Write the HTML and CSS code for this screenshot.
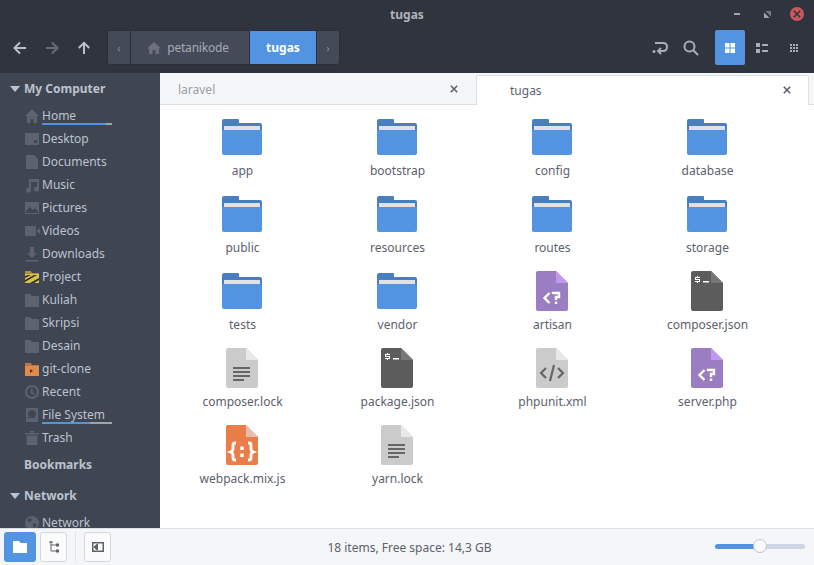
FILE: index.html
```html
<!DOCTYPE html>
<html lang="en">
<head>
    <meta charset="UTF-8">
    <title>tugas</title>
    <link rel="stylesheet" href="styles.css">
</head>

<body>
    <svg class="defs" width="0" height="0">
        <symbol id="folder" viewBox="0 0 40 36">
            <path fill="#4a7fbf" d="M2 0h14q1 0 1 1v3h21q2 0 2 2v6H0V2q0-2 2-2z"/>
            <path fill="#dfe1e4" d="M2 7h36v4H2z"/>
            <path fill="#5294e2" d="M0 11h40v23q0 2-2 2H2q-2 0-2-2z"/>
        </symbol>
        <symbol id="file-text" viewBox="0 0 32 40">
            <path fill="#cbcbcb" d="M2 0h18l12 12v26q0 2-2 2H2q-2 0-2-2V2q0-2 2-2z"/>
            <path fill="#e8e8e8" d="M20 0l12 12H20z"/>
            <path fill="#666" d="M7 19h17v2H7zM7 23h17v2H7zM7 27h17v2H7zM7 31h11v2H7z"/>
        </symbol>
        <symbol id="file-xml" viewBox="0 0 32 40">
            <path fill="#cbcbcb" d="M2 0h18l12 12v26q0 2-2 2H2q-2 0-2-2V2q0-2 2-2z"/>
            <path fill="#e8e8e8" d="M20 0l12 12H20z"/>
            <path fill="none" stroke="#666" stroke-width="2.200" d="M10 20l-5 5 5 5M22 20l5 5-5 5M18 17l-4 16"/>
        </symbol>
        <symbol id="file-php" viewBox="0 0 32 40">
            <path fill="#9a7dc2" d="M2 0h18l12 12v26q0 2-2 2H2q-2 0-2-2V2q0-2 2-2z"/>
            <path fill="#c198ec" d="M20 0l12 12H20z"/>
            <path fill="none" stroke="#fff" stroke-width="2.400" d="M13.500 22l-5 5 5 5M17 23v-1h6v4h-3v3"/>
            <path fill="#fff" d="M18.800 30.500h2.500V33h-2.500z"/>
        </symbol>
        <symbol id="file-term" viewBox="0 0 32 40">
            <path fill="#5c5c5c" d="M2 0h18l12 12v26q0 2-2 2H2q-2 0-2-2V2q0-2 2-2z"/>
            <path fill="#777" d="M20 0l12 12H20z"/>
            <path fill="#fff" d="M4 6h5v1H5v1h4v3H7v1H6v-1H4v-1h4V9H4zM6 5h1v1H6zM12 10h6v1.500h-6z"/>
        </symbol>
        <symbol id="file-js" viewBox="0 0 32 40">
            <path fill="#e97e4b" d="M2 0h18l12 12v26q0 2-2 2H2q-2 0-2-2V2q0-2 2-2z"/>
            <path fill="#e5bfa9" d="M20 0l12 12H20z"/>
            <path fill="none" stroke="#fff" stroke-width="2.800" d="M10 18H9q-2 0-2 2v4q0 2-2.500 3 2.500 1 2.500 3v3q0 2 2 2h1M22 18h1q2 0 2 2v4q0 2 2.500 3-2.500 1-2.500 3v3q0 2-2 2h-1"/>
            <path fill="#fff" d="M14.300 21.500h3.400v3.400h-3.400zM14.300 28.500h3.400v3.400h-3.400z"/>
        </symbol>
        <symbol id="s-folder" viewBox="0 0 16 16">
            <path d="M1 2h5l2 2h7v11H1z"/>
        </symbol>
        <symbol id="close" viewBox="0 0 10 10">
            <path fill="none" stroke="currentColor" stroke-width="2" d="M1 1l8 8M9 1l-8 8"/>
        </symbol>
    </svg>

    <header class="titlebar">
        <span></span>
        <span class="title">tugas</span>
        <div class="win-buttons">
            <span class="win-min"></span>
            <svg class="win-max" width="7" height="7" viewBox="0 0 7 7"><path d="M0 1.500V7h5.500z"/><path class="dim" d="M1.500 0H7v5.500z"/></svg>
            <span class="win-close"><svg width="8" height="8"><use href="#close"/></svg></span>
        </div>
    </header>

    <nav class="toolbar">
        <button class="nav-btn">
            <svg width="14" height="14" viewBox="0 0 14 14"><path d="M13 7H2M7 1.500L1.500 7 7 12.500"/></svg>
        </button>
        <button class="nav-btn off">
            <svg width="14" height="14" viewBox="0 0 14 14"><path d="M1 7h11M7 1.500L12.500 7 7 12.500"/></svg>
        </button>
        <button class="nav-btn">
            <svg width="14" height="14" viewBox="0 0 14 14"><path d="M7 13V2M1.800 7L7 1.800 12.200 7"/></svg>
        </button>

        <div class="pathbar">
            <span class="path-arrow">‹</span>
            <span class="path-item"><svg width="14" height="14" viewBox="0 0 14 14"><path d="M7 1l7 6.500h-2V13H8.500V9h-3v4H2V7.500H0z"/></svg>petanikode</span>
            <span class="path-item current">tugas</span>
            <span class="path-arrow last">›</span>
        </div>

        <div class="tools">
            <button class="tool-btn">
                <svg width="16" height="16" viewBox="0 0 16 16"><circle cx="2" cy="11.500" r="1.500" fill="#a9adb6"/><path class="stroke" d="M3 3h8q4 0 4 4t-4 4H6M9 8l-3 3 3 3"/></svg>
            </button>
            <button class="tool-btn">
                <svg width="16" height="16" viewBox="0 0 16 16"><circle class="stroke" cx="6.500" cy="6.500" r="5"/><path class="stroke" d="M10 10l5 5"/></svg>
            </button>
            <button class="view-btn active">
                <svg width="10" height="10" viewBox="0 0 10 10"><path d="M0 0h4.500v4.500H0zM5.500 0H10v4.500H5.500zM0 5.500h4.500V10H0zM5.500 5.500H10V10H5.500z"/></svg>
            </button>
            <button class="view-btn">
                <svg width="12" height="10" viewBox="0 0 12 10"><path d="M0 0h4v4H0zM0 6h4v4H0zM6 1h6v2H6zM6 7h6v2H6z"/></svg>
            </button>
            <button class="view-btn">
                <svg width="8" height="8" viewBox="0 0 8 8"><path d="M0 0h2v2H0zM3 0h2v2H3zM6 0h2v2H6zM0 3h2v2H0zM3 3h2v2H3zM6 3h2v2H6zM0 6h2v2H0zM3 6h2v2H3zM6 6h2v2H6z"/></svg>
            </button>
        </div>
    </nav>

    <div class="main">
        <aside class="sidebar">
            <div class="side-head"><span class="caret"></span>My Computer</div>
            <ul class="side-list">
                <li class="side-row">
                    <svg viewBox="0 0 16 16"><path d="M8 1l7 7h-2v7H9.500v-4h-3v4H3V8H1z"/></svg>Home
                    <span class="usage"><span class="used" style="width: 64px"></span></span>
                </li>
                <li class="side-row">
                    <svg viewBox="0 0 16 16"><path d="M1 2h14v12H1zM10 9v3h3V9z" fill-rule="evenodd"/></svg>Desktop
                </li>
                <li class="side-row">
                    <svg viewBox="0 0 16 16"><path d="M2 1h8l4 4v10H2z"/></svg>Documents
                </li>
                <li class="side-row">
                    <svg viewBox="0 0 16 16"><path d="M5 2h10v10a2.500 2.500 0 1 1-2-2.400V5H7v8a2.500 2.500 0 1 1-2-2.400z"/></svg>Music
                </li>
                <li class="side-row">
                    <svg viewBox="0 0 16 16"><path d="M1 2h14v12H1zM2 13h12v-2l-3-3-2 2-3-3-4 4z" fill-rule="evenodd"/></svg>Pictures
                </li>
                <li class="side-row">
                    <svg viewBox="0 0 16 16"><path d="M1 3h11v10H1zM13 7l3-2v6l-3-2z"/></svg>Videos
                </li>
                <li class="side-row">
                    <svg viewBox="0 0 16 16"><path d="M6 1h4v6h3l-5 5-5-5h3zM2 14h12v1.500H2z"/></svg>Downloads
                </li>
                <li class="side-row">
                    <svg viewBox="0 0 16 16"><path fill="#a8923a" d="M1 2h6l1 2h7v2H1z"/><path fill="#d9c44a" d="M1 5h14v9H1z"/><path fill="#33302a" d="M1 7l3-1h3l-6 3zM1 11l9-5h3L1 13zM6 14l9-5v2l-5 3z"/></svg>Project
                </li>
                <li class="side-row"><svg><use href="#s-folder"/></svg>Kuliah</li>
                <li class="side-row"><svg><use href="#s-folder"/></svg>Skripsi</li>
                <li class="side-row"><svg><use href="#s-folder"/></svg>Desain</li>
                <li class="side-row">
                    <svg viewBox="0 0 16 16"><path fill="#c4733c" d="M1 2h6l1 2h7v2H1z"/><path fill="#e08a4d" d="M1 5h14v10H1z"/><path fill="#5a3015" d="M6 8l3 2-3 2z"/></svg>git-clone
                </li>
                <li class="side-row">
                    <svg viewBox="0 0 16 16"><path fill-rule="evenodd" d="M8 1a7 7 0 1 0 0 14A7 7 0 0 0 8 1zm0 2a5 5 0 1 1 0 10A5 5 0 0 1 8 3zM7 4.500V9l3.500 2 .7-1.200L8.500 8.200V4.500z"/></svg>Recent
                </li>
                <li class="side-row">
                    <svg viewBox="0 0 16 16"><path fill-rule="evenodd" d="M2 1h12v14H2zM8 3a4 4 0 1 0 0 8 4 4 0 0 0 0-8zM4 12l2-2-1-1-2 2z"/></svg>File System
                    <span class="usage"><span class="used" style="width: 48px"></span></span>
                </li>
                <li class="side-row">
                    <svg viewBox="0 0 16 16"><path d="M1 3h14v1.500H1zM6 1h4v1.500H6zM2.500 5.500h11V15h-11z"/></svg>Trash
                </li>
            </ul>
            <div class="side-head plain">Bookmarks</div>
            <div class="side-head net"><span class="caret"></span>Network</div>
            <ul class="side-list">
                <li class="side-row">
                    <svg viewBox="0 0 16 16"><path fill-rule="evenodd" d="M8 1a7 7 0 1 0 0 14A7 7 0 0 0 8 1zM4 4l3-1 1 2-2 2-3-1zM9 8l4 1-2 4-2-1z"/></svg>Network
                </li>
            </ul>
        </aside>

        <section class="content">
            <div class="tabs">
                <div class="tab">
                    <span>laravel</span>
                    <svg class="tab-close" width="8" height="8"><use href="#close"/></svg>
                </div>
                <div class="tab active">
                    <span>tugas</span>
                    <svg class="tab-close" width="8" height="8"><use href="#close"/></svg>
                </div>
            </div>

            <div class="files">
                <div class="file"><svg class="ic-folder"><use href="#folder"/></svg><span>app</span></div>
                <div class="file"><svg class="ic-folder"><use href="#folder"/></svg><span>bootstrap</span></div>
                <div class="file"><svg class="ic-folder"><use href="#folder"/></svg><span>config</span></div>
                <div class="file"><svg class="ic-folder"><use href="#folder"/></svg><span>database</span></div>
                <div class="file"><svg class="ic-folder"><use href="#folder"/></svg><span>public</span></div>
                <div class="file"><svg class="ic-folder"><use href="#folder"/></svg><span>resources</span></div>
                <div class="file"><svg class="ic-folder"><use href="#folder"/></svg><span>routes</span></div>
                <div class="file"><svg class="ic-folder"><use href="#folder"/></svg><span>storage</span></div>
                <div class="file"><svg class="ic-folder"><use href="#folder"/></svg><span>tests</span></div>
                <div class="file"><svg class="ic-folder"><use href="#folder"/></svg><span>vendor</span></div>
                <div class="file"><svg class="ic-file"><use href="#file-php"/></svg><span>artisan</span></div>
                <div class="file"><svg class="ic-file"><use href="#file-term"/></svg><span>composer.json</span></div>
                <div class="file"><svg class="ic-file"><use href="#file-text"/></svg><span>composer.lock</span></div>
                <div class="file"><svg class="ic-file"><use href="#file-term"/></svg><span>package.json</span></div>
                <div class="file"><svg class="ic-file"><use href="#file-xml"/></svg><span>phpunit.xml</span></div>
                <div class="file"><svg class="ic-file"><use href="#file-php"/></svg><span>server.php</span></div>
                <div class="file"><svg class="ic-file"><use href="#file-js"/></svg><span>webpack.mix.js</span></div>
                <div class="file"><svg class="ic-file"><use href="#file-text"/></svg><span>yarn.lock</span></div>
            </div>
        </section>
    </div>

    <footer class="statusbar">
        <button class="bar-btn active">
            <svg width="14" height="12" viewBox="0 0 14 12"><path d="M0 0h6l1.500 2H14v10H0z"/></svg>
        </button>
        <button class="bar-btn">
            <svg width="12" height="12" viewBox="0 0 12 12"><path d="M3 0v10h8M3 4h8M1 1h4"/><path class="solid" d="M8 2.500h3v3H8zM8 8.500h3v3H8z"/></svg>
        </button>
        <span class="bar-sep"></span>
        <button class="bar-btn">
            <svg width="12" height="10" viewBox="0 0 12 10"><path class="thick" d="M.750.750h10.500v8.500H.750z"/><path class="solid" d="M4.500 2v6L1.500 5zM4.500 2H6v6H4.500z"/></svg>
        </button>
        <span class="status">18 items, Free space: 14,3 GB</span>
        <div class="zoom">
            <span class="zoom-fill"></span>
            <span class="zoom-knob"></span>
        </div>
    </footer>
</body>
</html>
```

FILE: styles.css
```css
*{
    box-sizing: border-box;
}
body{
    margin: 0;
    width: 814px;
    height: 565px;
    overflow: hidden;
    display: flex;
    flex-direction: column;
    font-family: "Noto Sans", sans-serif;
    font-size: 12px;
    color: #5c616c;
    background-color: #ffffff;
}
button{
    display: flex;
    align-items: center;
    justify-content: center;
    margin: 0;
    padding: 0;
    border: 0;
    background: none;
}
ul{
    margin: 0;
    padding: 0;
    list-style: none;
}
.defs{
    position: absolute;
}

/* title bar */
.titlebar{
    display: grid;
    grid-template-columns: 1fr auto 1fr;
    align-items: center;
    height: 28px;
    background-color: #2f343f;
}
.title{
    font-weight: 700;
    color: #afb3bb;
}
.win-buttons{
    display: flex;
    align-items: center;
    justify-content: flex-end;
    padding-right: 10px;
}
.win-min{
    width: 6px;
    height: 2px;
    margin-right: 24px;
    background-color: #a0a4ad;
}
.win-max{
    margin-right: 19px;
    fill: #a0a4ad;
}
.win-max .dim{
    fill: #777b85;
}
.win-close{
    display: flex;
    align-items: center;
    justify-content: center;
    width: 14px;
    height: 14px;
    border-radius: 50%;
    background-color: #cc575d;
    color: #2f343f;
}

/* toolbar */
.toolbar{
    display: flex;
    align-items: center;
    height: 45px;
    padding: 0 5px 6px 4px;
    background-color: #2f343f;
}
.nav-btn{
    width: 32px;
    height: 35px;
}
.nav-btn svg{
    fill: none;
    stroke: #bac0cb;
    stroke-width: 2;
}
.nav-btn.off svg{
    stroke: #666b78;
}
.pathbar{
    display: flex;
    align-items: stretch;
    flex: none;
    width: 233px;
    height: 35px;
    margin-left: 7px;
    border: 1px solid #2b2f3a;
    border-radius: 3px;
    background-color: #444a58;
    color: #a5aab5;
}
.path-arrow{
    display: flex;
    flex: none;
    align-items: center;
    justify-content: center;
    width: 22px;
    color: #878c98;
    font-size: 11px;
}
.path-arrow.last{
    width: 23px;
    border-left: 1px solid #2b2f3a;
}
.path-item{
    display: flex;
    flex: none;
    align-items: center;
    justify-content: center;
    gap: 6px;
    width: 120px;
    padding-right: 4px;
    border-left: 1px solid #2b2f3a;
    border-right: 1px solid #2b2f3a;
    letter-spacing: -0.2px;
}
.path-item svg{
    fill: #6c717d;
}
.path-item.current{
    width: 66px;
    padding-right: 0;
    border: 0;
    background-color: #5294e2;
    color: #ffffff;
    font-weight: 700;
    letter-spacing: 0;
}
.tools{
    display: flex;
    align-items: center;
    margin-left: auto;
}
.tool-btn{
    width: 30px;
    height: 35px;
    margin-right: 1px;
}
.stroke{
    fill: none;
    stroke: #a9adb6;
    stroke-width: 2;
}
.view-btn{
    width: 30px;
    height: 35px;
    margin-left: 2px;
    border-radius: 2px;
    fill: #a9adb6;
}
.tools .tool-btn + .view-btn{
    margin-left: 8px;
}
.view-btn.active{
    background-color: #5294e2;
    fill: #ffffff;
}

/* sidebar + content */
.main{
    display: flex;
    flex: 1;
    min-height: 0;
}
.sidebar{
    flex: none;
    width: 160px;
    padding-top: 4px;
    overflow: hidden;
    background-color: #404552;
    color: #bac3d0;
}
.side-head{
    display: flex;
    align-items: center;
    height: 23px;
    margin-bottom: 4px;
    padding-left: 24px;
    font-weight: 700;
    position: relative;
}
.side-head.plain{
    margin-top: 4px;
}
.side-head.net{
    margin-top: 8px;
}
.caret{
    position: absolute;
    left: 10px;
    top: 9px;
    border-left: 5px solid transparent;
    border-right: 5px solid transparent;
    border-top: 6px solid #bac3d0;
}
.side-row{
    display: flex;
    align-items: center;
    gap: 2px;
    height: 23px;
    padding-left: 24px;
    position: relative;
    white-space: nowrap;
}
.side-row svg{
    flex: none;
    width: 16px;
    height: 16px;
    fill: #5d6270;
}
.usage{
    position: absolute;
    left: 42px;
    top: 19px;
    width: 70px;
    height: 2px;
    background-color: #9ea2ab;
}
.used{
    display: block;
    height: 2px;
    background-color: #5294e2;
}
.content{
    display: flex;
    flex: 1;
    flex-direction: column;
    min-width: 0;
}
.tabs{
    display: flex;
    height: 32px;
    padding-right: 5px;
    background-color: #f5f6f7;
    border-bottom: 1px solid #dcdfe3;
}
.tab{
    display: flex;
    align-items: center;
    justify-content: space-between;
    width: 316px;
    padding: 1px 18px 0;
    color: #9a9ea6;
}
.tab.active{
    width: 333px;
    height: 30px;
    margin-top: 2px;
    padding: 0 17px 1px 33px;
    border: 1px solid #dcdfe3;
    border-bottom: 0;
    border-radius: 2px 2px 0 0;
    background-color: #ffffff;
    color: #5c616c;
    position: relative;
}
.tab-close{
    color: #5c616c;
}
.files{
    display: grid;
    flex: 1;
    grid-template-columns: repeat(4, 155px);
    grid-auto-rows: 77px;
    align-content: start;
    padding: 12px 5px 0;
    background-color: #ffffff;
}
.file{
    display: flex;
    flex-direction: column;
    align-items: center;
}
.ic-folder{
    width: 40px;
    height: 36px;
    margin: 2px 1px 2px 0;
}
.ic-file{
    width: 32px;
    height: 40px;
    margin-right: 1px;
}
.file span{
    margin-top: 5px;
    line-height: 17px;
}

/* status bar */
.statusbar{
    display: flex;
    align-items: center;
    height: 37px;
    padding-left: 4px;
    position: relative;
    background-color: #f5f6f7;
    border-top: 1px solid #dcdfe3;
}
.bar-btn{
    width: 27px;
    height: 30px;
    margin-right: 4px;
    border: 1px solid #d3d8e2;
    border-radius: 3px;
    background-color: #fbfbfc;
}
.bar-btn svg{
    fill: none;
    stroke: #5c616c;
}
.bar-btn .solid{
    fill: #5c616c;
    stroke: none;
}
.bar-btn .thick{
    stroke-width: 1.500;
}
.bar-btn.active{
    width: 32px;
    border: 0;
    background-color: #5294e2;
}
.bar-btn.active svg{
    fill: #ffffff;
    stroke: none;
}
.bar-sep{
    width: 1px;
    height: 30px;
    margin: 0 8px 0 4px;
    background-color: #e2e4e8;
}
.status{
    flex: 1;
    padding-right: 110px;
    text-align: center;
}
.zoom{
    position: absolute;
    left: 715px;
    top: 15px;
    width: 90px;
    height: 5px;
    border-radius: 3px;
    background-color: #cfd6e3;
}
.zoom-fill{
    display: block;
    width: 45px;
    height: 5px;
    border-radius: 3px;
    background-color: #5294e2;
}
.zoom-knob{
    position: absolute;
    left: 38px;
    top: -5px;
    width: 14px;
    height: 14px;
    border: 1px solid #b5c3dc;
    border-radius: 50%;
    background-color: #fbfbfc;
}
```
